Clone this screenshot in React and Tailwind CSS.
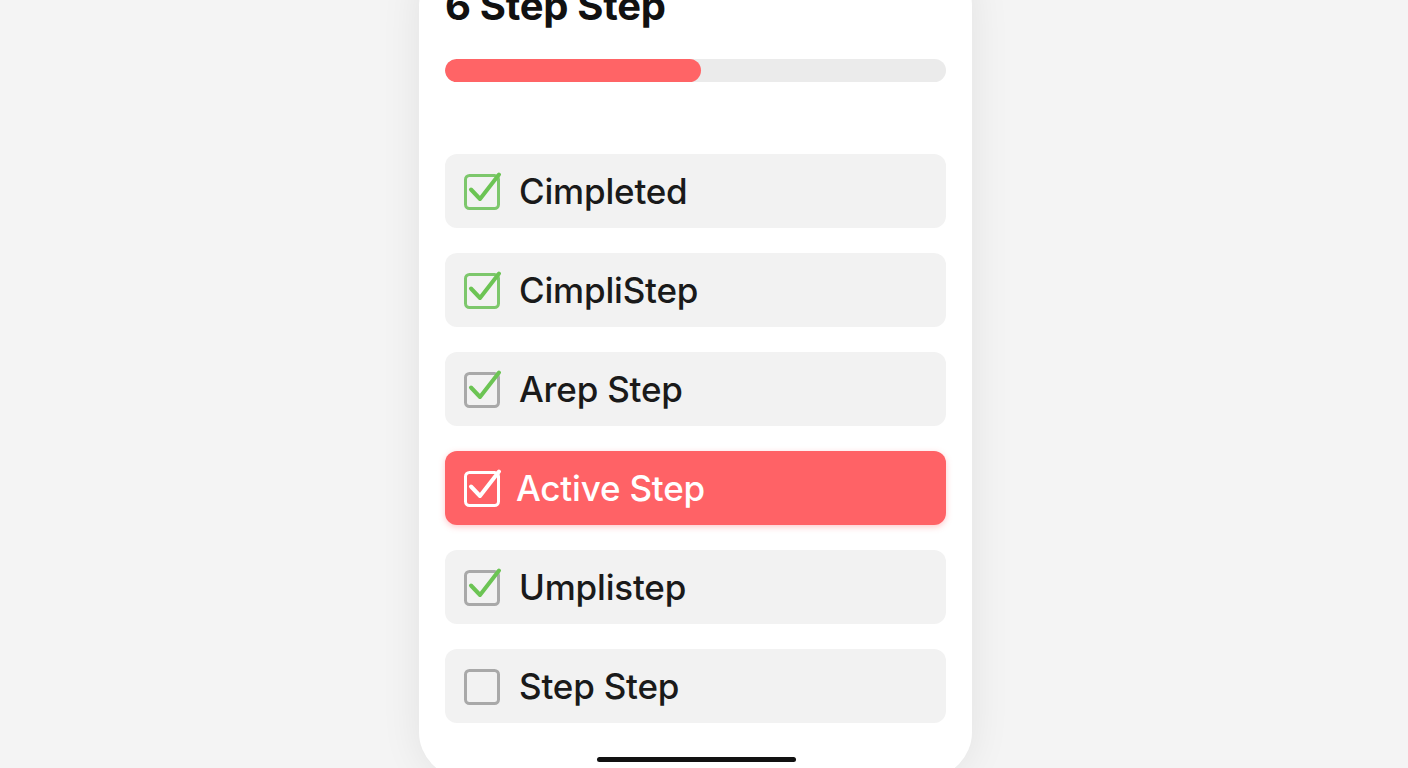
import React from 'react';

const steps = [
  { label: 'Cimpleted', state: 'done' },
  { label: 'CimpliStep', state: 'done' },
  { label: 'Arep Step', state: 'checked' },
  { label: 'Active Step', state: 'active' },
  { label: 'Umplistep', state: 'checked' },
  { label: 'Step Step', state: 'empty' },
];

const CheckIcon = ({ state }) => {
  const box =
    state === 'done' ? '#7dc76c' : state === 'active' ? '#ffffff' : '#a9a9a9';
  const tick = state === 'active' ? '#ffffff' : '#6cc454';
  return (
    <svg width="40" height="40" viewBox="0 0 40 40" fill="none" className="shrink-0">
      <rect x="2.5" y="4.5" width="33" height="33" rx="4" stroke={box} strokeWidth="3" />
      {state !== 'empty' && (
        <path
          d="M8 18.5 L17 28 L36 3.5"
          stroke={tick}
          strokeWidth="4"
          strokeLinecap="round"
          strokeLinejoin="round"
        />
      )}
    </svg>
  );
};

const StepRow = ({ label, state }) => {
  const active = state === 'active';
  return (
    <div
      className={`h-[74px] rounded-[12px] flex items-center pl-[18px] gap-[16px] ${
        active ? 'bg-[#ff6266] shadow-[0_2px_6px_rgba(255,98,102,0.35)]' : 'bg-[#f2f2f2]'
      }`}
    >
      <CheckIcon state={state} />
      <span
        className={`text-[35px] font-medium tracking-[-0.2px] ${
          active ? 'text-white -ml-[3px]' : 'text-[#1a1a1a]'
        }`}
      >
        {label}
      </span>
    </div>
  );
};

export default function App() {
  return (
    <div
      className="min-h-screen bg-[#f4f4f4] flex justify-center overflow-hidden"
      style={{ fontFamily: 'Inter, "Liberation Sans", sans-serif' }}
    >
      <div className="w-[553px] h-[818px] -mt-[40px] mr-[17px] bg-white rounded-[46px] shadow-[0_0_40px_rgba(0,0,0,0.08)] px-[26px] pt-[22px] flex flex-col">
        <h1 className="text-[40px] leading-[48px] font-bold text-[#111] tracking-[-0.3px]">
          6 Step Step
        </h1>
        <div className="mt-[29px] h-[23px] rounded-full bg-[#ebebeb] overflow-hidden">
          <div className="h-full w-[256px] rounded-full bg-[#ff6466]" />
        </div>
        <div className="mt-[72px] flex flex-col gap-[25px]">
          {steps.map(s => (
            <StepRow key={s.label} label={s.label} state={s.state} />
          ))}
        </div>
        <div className="mt-[34px] self-center w-[199px] h-[5px] rounded-full bg-[#111] translate-x-[1px]" />
      </div>
    </div>
  );
}
